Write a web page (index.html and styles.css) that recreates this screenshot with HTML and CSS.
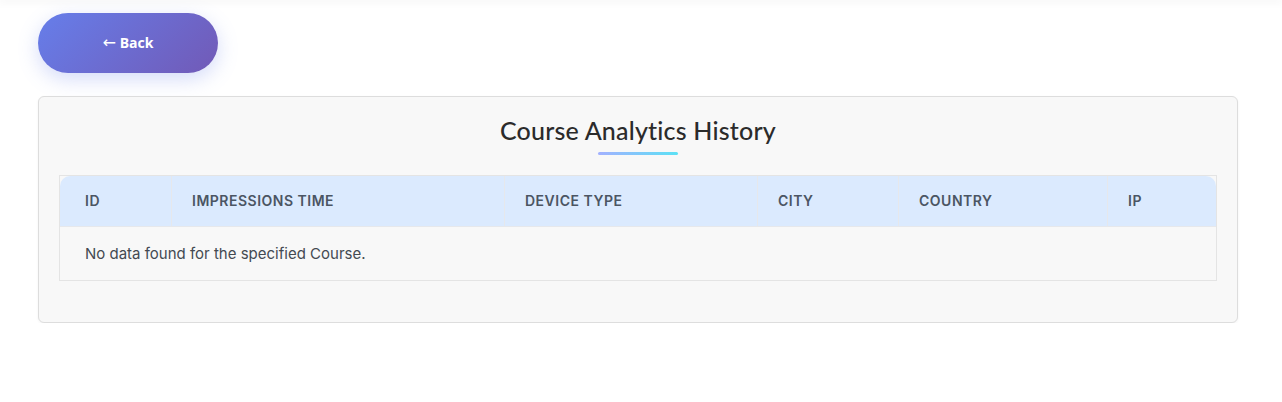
FILE: index.html
```html
<!DOCTYPE html>
<html lang="en">
<head>
<meta charset="utf-8">
<title>Course Analytics History</title>
<link rel="stylesheet" href="styles.css">
</head>
<body>
<div class="topshade"></div>
<main class="page">
  <a class="back-btn" href="#"><span class="arrow">&larr;</span>&nbsp;Back</a>
  <section class="card">
    <h2 class="title">Course Analytics History</h2>
    <div class="title-line"></div>
    <table class="data-table">
      <thead>
        <tr>
          <th class="c-id">ID</th>
          <th class="c-time">Impressions Time</th>
          <th class="c-device">Device Type</th>
          <th class="c-city">City</th>
          <th class="c-country">Country</th>
          <th class="c-ip">IP</th>
        </tr>
      </thead>
      <tbody>
        <tr>
          <td colspan="6">No data found for the specified Course.</td>
        </tr>
      </tbody>
    </table>
  </section>
</main>
</body>
</html>
```

FILE: styles.css
```css
html, body {
  margin: 0;
  padding: 0;
  background: #ffffff;
}

body {
  font-family: Inter, "Liberation Sans", sans-serif;
}

.topshade {
  height: 0;
  box-shadow: 0 0 8px 2px rgba(0, 0, 0, 0.06);
}

.page {
  padding: 13px 0 0 38px;
}

.back-btn {
  display: flex;
  align-items: center;
  justify-content: center;
  width: 180px;
  height: 60px;
  padding-bottom: 2px;
  box-sizing: border-box;
  border-radius: 30px;
  background: linear-gradient(135deg, #667eea 0%, #764ba2 140%);
  color: #ffffff;
  font-family: "Open Sans", sans-serif;
  font-weight: 700;
  font-size: 14px;
  text-decoration: none;
  box-shadow: 0 6px 20px rgba(102, 126, 234, 0.28);
}

.arrow {
  font-family: "DejaVu Sans", sans-serif;
  font-weight: 400;
  font-size: 16px;
  vertical-align: -3px;
}

.card {
  margin-top: 23px;
  width: 1200px;
  box-sizing: border-box;
  background: #f8f8f8;
  border: 1px solid #dddddd;
  border-radius: 6px;
  padding: 19px 20px 41px;
  box-shadow: 0 1px 3px rgba(0, 0, 0, 0.05);
}

.title {
  margin: 0;
  text-align: center;
  font-family: Lato, "Open Sans", sans-serif;
  font-weight: 500;
  font-size: 25px;
  letter-spacing: 0.2px;
  line-height: 28px;
  color: #2b2b2b;
}

.title-line {
  width: 80px;
  height: 3px;
  margin: 8px auto 0;
  border-radius: 2px;
  background: linear-gradient(90deg, #a3b1ff, #5ce1f5);
}

.data-table {
  margin-top: 20px;
  width: 100%;
  table-layout: fixed;
  border-collapse: separate;
  border-spacing: 0;
  border: 1px solid #e4e4e4;
}

.data-table th {
  height: 51px;
  box-sizing: border-box;
  padding: 0 0 1px 20px;
  background: #dbeafe;
  border-left: 1px solid #e6e8ec;
  border-bottom: 1px solid #e6e8ec;
  text-align: left;
  text-transform: uppercase;
  font-size: 14px;
  font-weight: 600;
  letter-spacing: 0.5px;
  color: #4b5563;
}

.data-table th.c-id { width: 111px; padding-left: 25px; }
.data-table th.c-time { width: 333px; }
.data-table th.c-device { width: 253px; }
.data-table th.c-city { width: 141px; }
.data-table th.c-country { width: 209px; }
.data-table th.c-ip { width: 109px; }

.data-table th:first-child {
  border-left: none;
  border-top-left-radius: 10px;
}

.data-table th:last-child {
  border-top-right-radius: 10px;
}

.data-table td {
  height: 53px;
  box-sizing: border-box;
  padding: 0 0 1px 25px;
  font-size: 15px;
  color: #444a52;
  border-bottom-left-radius: 10px;
  border-bottom-right-radius: 10px;
}
```
